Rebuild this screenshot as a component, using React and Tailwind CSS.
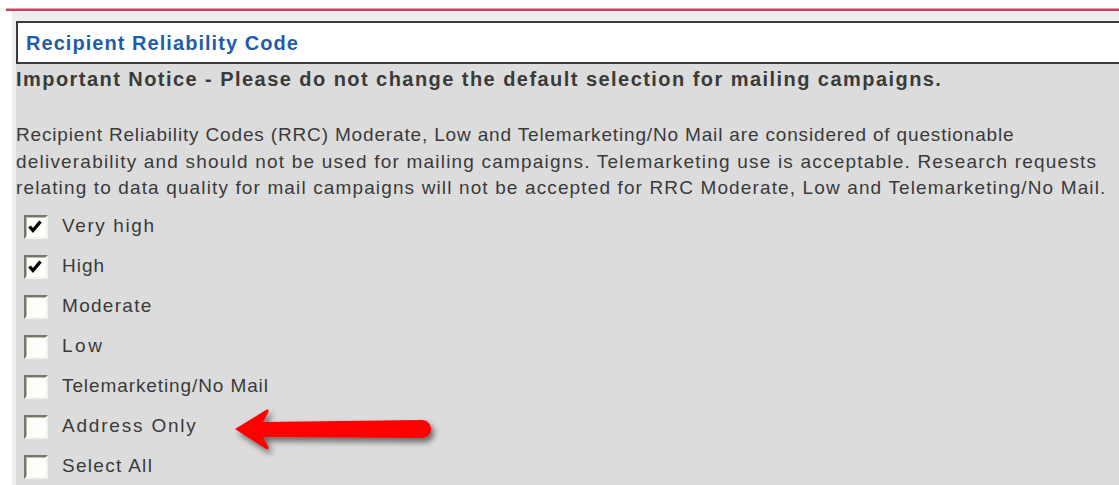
import React from 'react';

const options = [
  { label: 'Very high', checked: true, track: 'tracking-[1.6px]' },
  { label: 'High', checked: true, track: 'tracking-[1px]' },
  { label: 'Moderate', checked: false, track: 'tracking-[1.3px]' },
  { label: 'Low', checked: false, track: 'tracking-[2.5px]' },
  { label: 'Telemarketing/No Mail', checked: false, track: 'tracking-[0.9px]' },
  { label: 'Address Only', checked: false, track: 'tracking-[1.8px]' },
  { label: 'Select All', checked: false, track: 'tracking-[1.3px]' },
];

const noticeLines = [
  {
    text: 'Recipient Reliability Codes (RRC) Moderate, Low and Telemarketing/No Mail are considered of questionable',
    track: 'tracking-[0.84px]',
  },
  {
    text: 'deliverability and should not be used for mailing campaigns. Telemarketing use is acceptable. Research requests',
    track: 'tracking-[1.2px]',
  },
  {
    text: 'relating to data quality for mail campaigns will not be accepted for RRC Moderate, Low and Telemarketing/No Mail.',
    track: 'tracking-[1.13px]',
  },
];

// classic sunken Windows-style checkbox
function ClassicCheckbox({ checked }) {
  return (
    <div className="relative w-[24px] h-[24px] bg-[#fdfdfb] border-2 border-t-[#76766a] border-l-[#76766a] border-b-[#f3f2ea] border-r-[#f3f2ea] shrink-0">
      <div className="absolute inset-0 border border-t-[#bdbcae] border-l-[#bdbcae] border-b-white border-r-white" />
      {checked && (
        <svg className="absolute inset-0" width="20" height="20" viewBox="0 0 20 20">
          <path d="M3.5 9.5 L7 13.5 L14.5 4.5" fill="none" stroke="#000" strokeWidth="3.4" strokeLinejoin="miter" />
        </svg>
      )}
    </div>
  );
}

function RedArrow() {
  return (
    <svg
      className="absolute left-[226px] top-[400px]"
      width="220"
      height="66"
      viewBox="0 0 220 66"
    >
      <defs>
        <filter id="arrowShadow" x="-10%" y="-30%" width="130%" height="170%">
          <feGaussianBlur in="SourceAlpha" stdDeviation="3" />
          <feOffset dx="3" dy="4" result="blur" />
          <feComponentTransfer>
            <feFuncA type="linear" slope="0.55" />
          </feComponentTransfer>
          <feMerge>
            <feMergeNode />
            <feMergeNode in="SourceGraphic" />
          </feMerge>
        </filter>
      </defs>
      <path
        d="M9 29 L40 10 C42 9 43 10 42.5 12 L37 22 L196 20 C201 20 205 24 205 29 C205 34 201 38 196 38 L37 37 L42.5 47 C43 49 42 50 40 49 Z"
        fill="#ff0000"
        filter="url(#arrowShadow)"
      />
    </svg>
  );
}

export default function App() {
  return (
    <div className="relative w-full h-[485px] overflow-hidden bg-white pt-[8px] font-['Liberation_Sans',Arial,sans-serif]">
      {/* top rule */}
      <div className="ml-[6px] h-[3px] border-t border-[#e7a3b3] bg-[#c9405f]" />

      <div className="ml-[12px] pl-[4px] bg-[#eeeeee] pt-[10px]">
        <div className="h-[43px] bg-white border-y-2 border-l-2 border-[#3a3a3a] flex items-center pl-[8px]">
          <span className="text-[20px] font-bold tracking-[1.05px] text-[#1f5dab] whitespace-nowrap">
            Recipient Reliability Code
          </span>
        </div>

        <div className="bg-[#dcdcdc] h-[430px]">
          <p className="pt-[4px] text-[20px] leading-[22px] font-bold tracking-[1.45px] text-[#3a3a3a] whitespace-nowrap">
            Important Notice - Please do not change the default selection for mailing campaigns.
          </p>
          <p className="mt-[32px] text-[19px] leading-[26.5px] text-[#3a3a3a]">
            {noticeLines.map((line) => (
              <span key={line.text} className={`block whitespace-nowrap ${line.track}`}>{line.text}</span>
            ))}
          </p>

          <div className="mt-[5px]">
            {options.map((opt) => (
              <div key={opt.label} className="h-[40px] flex items-center pl-[8px] gap-[14px]">
                <ClassicCheckbox checked={opt.checked} />
                <span className={`text-[19px] text-[#3a3a3a] whitespace-nowrap ${opt.track}`}>{opt.label}</span>
              </div>
            ))}
          </div>
        </div>
      </div>

      <RedArrow />
    </div>
  );
}
